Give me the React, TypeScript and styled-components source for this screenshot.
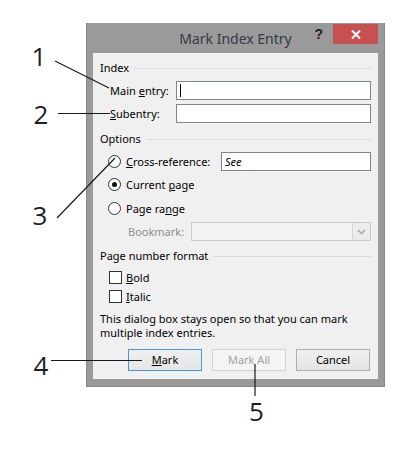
import styled, { createGlobalStyle } from 'styled-components';

const GlobalStyle = createGlobalStyle`
  body {
    margin: 0;
    background: #fff;
    font-family: "Noto Sans", "Open Sans", sans-serif;
  }
`;

const Stage = styled.div`
  position: relative;
  width: 399px;
  height: 464px;
  padding: 23px 0 0 86px;
  box-sizing: border-box;
  overflow: hidden;
  background: #fff;
`;

const Window = styled.div`
  width: 299px;
  height: 364px;
  box-sizing: border-box;
  background: #9a9a9a;
  border: 1px solid #8a8a8a;
  border-top: none;
  padding: 0 6px 7px;
  display: flex;
  flex-direction: column;
`;

const TitleBar = styled.div`
  height: 30px;
  display: grid;
  grid-template-columns: 1fr auto 1fr;
  align-items: start;
`;

const Title = styled.div`
  grid-column: 2;
  font-size: 14px;
  line-height: 31px;
  color: #323a44;
  white-space: nowrap;
`;

const Controls = styled.div`
  grid-column: 3;
  justify-self: end;
  display: flex;
  align-items: flex-start;
`;

const HelpMark = styled.span`
  margin-top: 1px;
  margin-right: 10px;
  font-family: "Liberation Sans", sans-serif;
  font-weight: bold;
  font-size: 14px;
  line-height: 20px;
  color: #222;
`;

const CloseButton = styled.div`
  width: 45px;
  height: 20px;
  margin-top: 1px;
  background: #c75050;
  display: flex;
  align-items: center;
  justify-content: center;
`;

const Panel = styled.div`
  flex: 1;
  background: #f0f0f0;
  padding: 0 7px;
  display: flex;
  flex-direction: column;
  font-size: 11px;
  color: #000;
`;

const GroupHeader = styled.div<{ $mt: number }>`
  margin-top: ${(p) => p.$mt}px;
  height: 16px;
  line-height: 16px;
  display: flex;
  align-items: center;
  gap: 5px;

  &::after {
    content: '';
    flex: 1;
    height: 1px;
    background: #dcdcdc;
  }
`;

const Row = styled.div<{ $mt: number; $indent: number }>`
  margin-top: ${(p) => p.$mt}px;
  padding-left: ${(p) => p.$indent}px;
  height: 19px;
  display: flex;
  align-items: center;
  line-height: 19px;
`;

const Label = styled.span<{ $width?: number; $disabled?: boolean }>`
  flex-shrink: 0;
  width: ${(p) => (p.$width ? `${p.$width}px` : 'auto')};
  color: ${(p) => (p.$disabled ? '#8e8e8e' : '#000')};
  white-space: nowrap;
`;

const TextBox = styled.div<{ $italic?: boolean }>`
  flex: 1;
  height: 19px;
  box-sizing: border-box;
  border: 1px solid #7f8590;
  background: #fff;
  padding-left: 3px;
  line-height: 17px;
  font-style: ${(p) => (p.$italic ? 'italic' : 'normal')};
  display: flex;
  align-items: center;
`;

const Caret = styled.span`
  width: 1px;
  height: 13px;
  background: #000;
`;

const Combo = styled.div`
  flex: 1;
  height: 19px;
  box-sizing: border-box;
  border: 1px solid #cacaca;
  background: #f2f2f2;
  display: flex;
  justify-content: flex-end;
`;

const ComboArrow = styled.div`
  width: 17px;
  border-left: 1px solid #d6d6d6;
  background: #ececec;
  display: flex;
  align-items: center;
  justify-content: center;
`;

const Radio = styled.span<{ $checked?: boolean }>`
  width: 13px;
  height: 13px;
  box-sizing: border-box;
  border-radius: 50%;
  border: 1px solid #333;
  background: #fff;
  margin-right: 5px;
  flex-shrink: 0;
  display: flex;
  align-items: center;
  justify-content: center;

  &::after {
    content: '';
    width: 5px;
    height: 5px;
    border-radius: 50%;
    background: ${(p) => (p.$checked ? '#111' : 'transparent')};
  }
`;

const Checkbox = styled.span`
  width: 13px;
  height: 13px;
  box-sizing: border-box;
  border: 1px solid #333;
  background: #fff;
  margin-right: 4px;
  flex-shrink: 0;
`;

const Note = styled.p`
  margin: 6px 0 0;
  line-height: 14px;
`;

const ButtonRow = styled.div`
  margin-top: 9px;
  padding-right: 1px;
  display: flex;
  justify-content: flex-end;
  gap: 10px;
`;

const Button = styled.div<{ $variant?: 'default' | 'disabled' }>`
  width: 74px;
  height: 22px;
  box-sizing: border-box;
  display: flex;
  align-items: center;
  justify-content: center;
  line-height: 20px;
  border: 1px solid
    ${(p) => (p.$variant === 'default' ? '#3d9be9' : p.$variant === 'disabled' ? '#d3d3d3' : '#adadad')};
  background: ${(p) => (p.$variant === 'disabled' ? '#f4f4f4' : 'linear-gradient(#f0f0f0, #e5e5e5)')};
  color: ${(p) => (p.$variant === 'disabled' ? '#a3a3a3' : '#000')};
`;

const Callout = styled.span<{ $x: number; $y: number }>`
  position: absolute;
  left: ${(p) => p.$x - 15}px;
  top: ${(p) => p.$y - 23}px;
  width: 30px;
  text-align: center;
  font-family: "Open Sans", sans-serif;
  font-size: 26px;
  line-height: 26px;
  color: #1f1f1f;
`;

const Leaders = styled.svg`
  position: absolute;
  left: 0;
  top: 0;
  pointer-events: none;
`;

export default function App() {
  return (
    <>
      <GlobalStyle />
      <Stage>
        <Window>
          <TitleBar>
            <Title>Mark Index Entry</Title>
            <Controls>
              <HelpMark>?</HelpMark>
              <CloseButton>
                <svg width="10" height="9" viewBox="0 0 10 9">
                  <path d="M1 0.5 L9 8.5 M9 0.5 L1 8.5" stroke="#fff" strokeWidth="2" />
                </svg>
              </CloseButton>
            </Controls>
          </TitleBar>
          <Panel>
            <GroupHeader $mt={7}>Index</GroupHeader>
            <Row $mt={5} $indent={10}>
              <Label $width={66}>
                Main <u>e</u>ntry:
              </Label>
              <TextBox>
                <Caret />
              </TextBox>
            </Row>
            <Row $mt={4} $indent={10}>
              <Label $width={66}>
                <u>S</u>ubentry:
              </Label>
              <TextBox />
            </Row>

            <GroupHeader $mt={8}>Options</GroupHeader>
            <Row $mt={5} $indent={8}>
              <Radio />
              <Label $width={95}>
                <u>C</u>ross-reference:
              </Label>
              <TextBox $italic>See</TextBox>
            </Row>
            <Row $mt={4} $indent={8}>
              <Radio $checked />
              <Label>
                Current <u>p</u>age
              </Label>
            </Row>
            <Row $mt={5} $indent={8}>
              <Radio />
              <Label>
                Page ra<u>n</u>ge
              </Label>
            </Row>
            <Row $mt={4} $indent={28}>
              <Label $width={63} $disabled>
                Bookmark:
              </Label>
              <Combo>
                <ComboArrow>
                  <svg width="9" height="6" viewBox="0 0 9 6">
                    <path d="M1 1 L4.5 4.5 L8 1" fill="none" stroke="#a8a8a8" strokeWidth="1.5" />
                  </svg>
                </ComboArrow>
              </Combo>
            </Row>

            <GroupHeader $mt={7}>Page number format</GroupHeader>
            <Row $mt={4} $indent={9}>
              <Checkbox />
              <Label>
                <u>B</u>old
              </Label>
            </Row>
            <Row $mt={0} $indent={9}>
              <Checkbox />
              <Label>
                <u>I</u>talic
              </Label>
            </Row>

            <Note>
              This dialog box stays open so that you can mark
              <br />
              multiple index entries.
            </Note>

            <ButtonRow>
              <Button $variant="default">
                <u>M</u>ark
              </Button>
              <Button $variant="disabled">Mark All</Button>
              <Button>Cancel</Button>
            </ButtonRow>
          </Panel>
        </Window>

        <Leaders width="399" height="464">
          <g stroke="#1a1a1a" strokeWidth="1.2" fill="none">
            <line x1="55" y1="61" x2="109" y2="88" />
            <line x1="58" y1="113.5" x2="110" y2="113.5" />
            <line x1="57" y1="218" x2="115" y2="158" />
            <line x1="51" y1="360.5" x2="142" y2="360.5" />
            <line x1="255" y1="364" x2="255" y2="396" />
          </g>
        </Leaders>

        <Callout $x={39} $y={66}>1</Callout>
        <Callout $x={41} $y={124}>2</Callout>
        <Callout $x={40} $y={225}>3</Callout>
        <Callout $x={41} $y={375}>4</Callout>
        <Callout $x={256.5} $y={421}>5</Callout>
      </Stage>
    </>
  );
}
